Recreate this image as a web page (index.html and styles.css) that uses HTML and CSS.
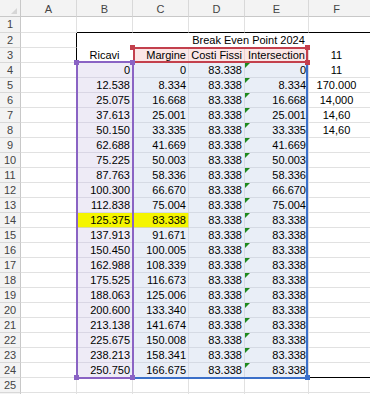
FILE: index.html
```html
<!DOCTYPE html>
<html lang="it">
<head>
    <meta charset="UTF-8">
    <title>Break Even Point 2024</title>
    <link rel="stylesheet" href="styles.css">
</head>
<body>
    <div class="sheet">
        <!-- intestazioni colonne -->
        <div class="corner"></div>
        <div class="hd">A</div>
        <div class="hd">B</div>
        <div class="hd">C</div>
        <div class="hd">D</div>
        <div class="hd">E</div>
        <div class="hd f">F</div>

        <div class="rh">1</div><div></div><div class="top"></div><div class="top"></div><div class="top"></div><div class="top"></div><div class="top"></div>
        <div class="rh">2</div><div class="left"></div><div class="blank"></div><div class="blank"></div><div class="blank title">Break Even Point 2024</div><div class="blank"></div>
        <div class="rh">3</div><div class="left"></div><div class="blank ctr">Ricavi</div><div class="pk num">Margine</div><div class="pk num">Costi Fissi</div><div class="pk ctr">Intersection</div><div class="blank ctr f">11</div>

        <div class="rh">4</div><div class="left"></div><div class="pu num">0</div><div class="bl num">0</div><div class="bl num">83.338</div><div class="bl num err">0</div><div class="ctr f">11</div>
        <div class="rh">5</div><div class="left"></div><div class="pu num">12.538</div><div class="bl num">8.334</div><div class="bl num">83.338</div><div class="bl num err">8.334</div><div class="ctr f">170.000</div>
        <div class="rh">6</div><div class="left"></div><div class="pu num">25.075</div><div class="bl num">16.668</div><div class="bl num">83.338</div><div class="bl num err">16.668</div><div class="ctr f">14,000</div>
        <div class="rh">7</div><div class="left"></div><div class="pu num">37.613</div><div class="bl num">25.001</div><div class="bl num">83.338</div><div class="bl num err">25.001</div><div class="ctr f">14,60</div>
        <div class="rh">8</div><div class="left"></div><div class="pu num">50.150</div><div class="bl num">33.335</div><div class="bl num">83.338</div><div class="bl num err">33.335</div><div class="ctr f">14,60</div>
        <div class="rh">9</div><div class="left"></div><div class="pu num">62.688</div><div class="bl num">41.669</div><div class="bl num">83.338</div><div class="bl num err">41.669</div><div></div>
        <div class="rh">10</div><div class="left"></div><div class="pu num">75.225</div><div class="bl num">50.003</div><div class="bl num">83.338</div><div class="bl num err">50.003</div><div></div>
        <div class="rh">11</div><div class="left"></div><div class="pu num">87.763</div><div class="bl num">58.336</div><div class="bl num">83.338</div><div class="bl num err">58.336</div><div></div>
        <div class="rh">12</div><div class="left"></div><div class="pu num">100.300</div><div class="bl num">66.670</div><div class="bl num">83.338</div><div class="bl num err">66.670</div><div></div>
        <div class="rh">13</div><div class="left"></div><div class="pu num">112.838</div><div class="bl num">75.004</div><div class="bl num">83.338</div><div class="bl num err">75.004</div><div></div>
        <div class="rh">14</div><div class="left"></div><div class="ye num">125.375</div><div class="ye num">83.338</div><div class="bl num">83.338</div><div class="bl num err">83.338</div><div></div>
        <div class="rh">15</div><div class="left"></div><div class="pu num">137.913</div><div class="bl num">91.671</div><div class="bl num">83.338</div><div class="bl num err">83.338</div><div></div>
        <div class="rh">16</div><div class="left"></div><div class="pu num">150.450</div><div class="bl num">100.005</div><div class="bl num">83.338</div><div class="bl num err">83.338</div><div></div>
        <div class="rh">17</div><div class="left"></div><div class="pu num">162.988</div><div class="bl num">108.339</div><div class="bl num">83.338</div><div class="bl num err">83.338</div><div></div>
        <div class="rh">18</div><div class="left"></div><div class="pu num">175.525</div><div class="bl num">116.673</div><div class="bl num">83.338</div><div class="bl num err">83.338</div><div></div>
        <div class="rh">19</div><div class="left"></div><div class="pu num">188.063</div><div class="bl num">125.006</div><div class="bl num">83.338</div><div class="bl num err">83.338</div><div></div>
        <div class="rh">20</div><div class="left"></div><div class="pu num">200.600</div><div class="bl num">133.340</div><div class="bl num">83.338</div><div class="bl num err">83.338</div><div></div>
        <div class="rh">21</div><div class="left"></div><div class="pu num">213.138</div><div class="bl num">141.674</div><div class="bl num">83.338</div><div class="bl num err">83.338</div><div></div>
        <div class="rh">22</div><div class="left"></div><div class="pu num">225.675</div><div class="bl num">150.008</div><div class="bl num">83.338</div><div class="bl num err">83.338</div><div></div>
        <div class="rh">23</div><div class="left"></div><div class="pu num">238.213</div><div class="bl num">158.341</div><div class="bl num">83.338</div><div class="bl num err">83.338</div><div></div>
        <div class="rh">24</div><div class="left"></div><div class="pu num bottom">250.750</div><div class="bl num bottom">166.675</div><div class="bl num bottom">83.338</div><div class="bl num err bottom">83.338</div><div class="bottom"></div>
        <div class="rh">25</div><div></div><div></div><div></div><div></div><div></div><div></div>
        <div class="rh last"></div><div></div><div></div><div></div><div></div><div></div><div></div>

        <!-- riferimenti della formula -->
        <span class="ref ref-c"></span>
        <span class="ref ref-h"></span>
        <span class="ref ref-b"></span>
        <span class="dot dot-red" style="left:130px;top:45px"></span>
        <span class="dot dot-red" style="left:305px;top:45px"></span>
        <span class="dot dot-red" style="left:305px;top:60px"></span>
        <span class="dot dot-blue" style="left:305px;top:375px"></span>
        <span class="dot dot-purple" style="left:74px;top:60px"></span>
        <span class="dot dot-purple" style="left:130px;top:60px"></span>
        <span class="dot dot-purple" style="left:74px;top:375px"></span>
        <span class="dot dot-purple" style="left:130px;top:375px"></span>
    </div>
</body>
</html>
```

FILE: styles.css
```css
* {
    margin: 0;
    padding: 0;
    box-sizing: border-box;
}
body {
    background: #fff;
    color: #000;
    font-family: "Liberation Sans", Arial, sans-serif;
    font-size: 11px;
    overflow: hidden;
}
.sheet {
    position: relative;
    display: grid;
    grid-template-columns: 21px 56px 56px 56px 56px 64px 62px;
    grid-template-rows: 17px 16px repeat(25, 15px);
    width: 371px;
}
.sheet > div {
    position: relative;
    border-right: 1px solid #e1e1e1;
    border-bottom: 1px solid #e1e1e1;
    padding: 0 2px;
    line-height: 14px;
    white-space: nowrap;
}
.sheet > .corner {
    background: #f3f3f3;
    border-color: #c8c8c8;
}
.corner::after {
    content: "";
    position: absolute;
    right: 3px;
    bottom: 2px;
    border-left: 6px solid transparent;
    border-bottom: 6px solid #d6d6d6;
}
.sheet > .hd {
    background: #f3f3f3;
    border-right-color: #d8d8d8;
    border-bottom-color: #c8c8c8;
    color: #444;
    text-align: center;
    padding-top: 2px;
    line-height: 14px;
}
.sheet > .rh {
    background: #f3f3f3;
    border-right-color: #c8c8c8;
    border-bottom-color: #d8d8d8;
    color: #444;
    text-align: center;
    padding: 0;
}
.sheet > .f {
    padding-right: 8px;
}
.num {
    text-align: right;
}
.ctr {
    text-align: center;
}
.sheet > .blank {
    border-right-color: transparent;
    border-bottom-color: transparent;
}
.sheet > .title {
    grid-column: span 2;
    text-align: center;
}
.sheet > .top {
    border-bottom-color: #000;
}
.sheet > .left {
    border-right-color: #000;
}
.sheet > .bottom {
    border-bottom-color: #000;
}
.sheet > .pu {
    background: #eeebf6;
    border-color: #d9d6e4;
}
.sheet > .bl {
    background: #e9eef7;
    border-color: #d5dae4;
}
.sheet > .pk {
    background: #fbe6e6;
    border-color: #e8d2d2;
}
.sheet > .ye {
    background: #f5f500;
    border-color: #d9d9a0;
}
.sheet > .bottom.pu,
.sheet > .bottom.bl {
    border-bottom-color: #000;
}
.err::before {
    content: "";
    position: absolute;
    left: 0;
    top: 0;
    border-top: 5px solid #1e8a1e;
    border-right: 5px solid transparent;
}
.ref {
    position: absolute;
    border: 2px solid;
}
.ref-b {
    left: 76px;
    top: 61px;
    width: 58px;
    height: 318px;
    border-color: #8a63c4;
}
.ref-c {
    left: 132px;
    top: 61px;
    width: 176px;
    height: 318px;
    border-color: #3b6fc9;
}
.ref-h {
    left: 133px;
    top: 47px;
    width: 175px;
    height: 16px;
    border-color: #c3404d;
}
.dot {
    position: absolute;
    width: 5px;
    height: 5px;
}
.dot-red {
    background: #c3404d;
}
.dot-blue {
    background: #3b6fc9;
}
.dot-purple {
    background: #8a63c4;
}
```
